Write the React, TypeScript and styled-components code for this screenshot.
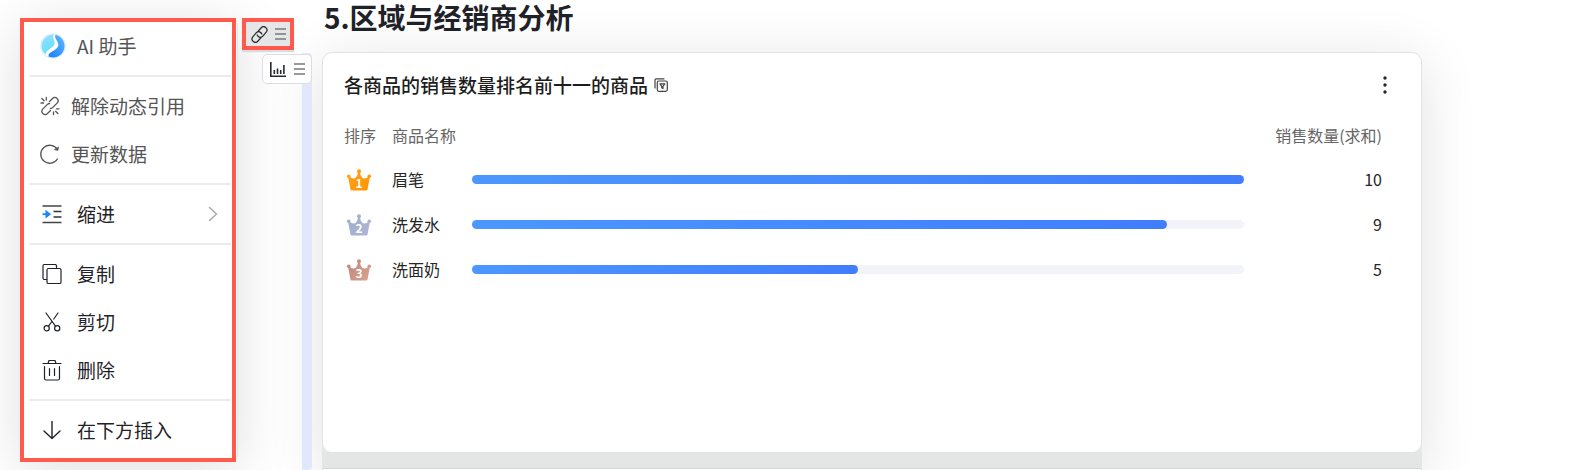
import React from "react";
import styled, { createGlobalStyle } from "styled-components";

const GlobalStyle = createGlobalStyle`
  * { box-sizing: border-box; }
  body {
    margin: 0;
    background: #fff;
    color: #1f2329;
    font-family: "Noto Sans CJK SC", sans-serif;
  }
  button {
    font: inherit;
    color: inherit;
    border: 0;
    background: none;
    padding: 0;
    cursor: pointer;
  }
`;

const Page = styled.div`
  display: flex;
  min-height: 100vh;
  padding-right: 162px;
`;

const MenuPanel = styled.div`
  position: relative;
  z-index: 1;
  flex: none;
  align-self: flex-start;
  margin: 18px 0 8px 20px;
  border-right: 1px solid #e3e4e5;
  padding-right: 1px;
  border-radius: 4px 8px 8px 4px;
  background: #fff;
  box-shadow: 0 8px 56px rgba(0, 0, 0, 0.13);
`;

const Menu = styled.nav`
  width: 216px;
  border: 4px solid #ff5a4d;
  padding-bottom: 4px;
`;

const MenuGroup = styled.div`
  & + &::before {
    content: "";
    display: block;
    height: 2px;
    margin: 5px 1px 5px 5px;
    background: #ebebeb;
  }
`;

const MenuItem = styled.button<{ $muted?: boolean; $inset: number; $gap: number }>`
  display: flex;
  align-items: center;
  gap: ${(p) => p.$gap}px;
  width: 100%;
  height: 48px;
  padding: 0 14px 0 ${(p) => p.$inset}px;
  font-size: 19px;
  line-height: 28px;
  color: ${(p) => (p.$muted ? "#555" : "#1f2329")};
  white-space: nowrap;

  svg { flex: none; }
`;

const ItemLabel = styled.span`
  flex: 1;
  text-align: left;
`;

const Gutter = styled.div`
  display: flex;
  flex-direction: column;
  flex: none;
  width: 70px;
  margin: 18px 0 0 4px;
  position: relative;
  z-index: 2;
`;

const LinkHandle = styled.button`
  display: flex;
  align-items: center;
  justify-content: center;
  gap: 7px;
  width: 52px;
  height: 32px;
  border: 4px solid #ff5a4d;
  background: #e5e7e6;
  box-shadow: 0 2px 1px #d9dbdb;
`;

const BlockTrack = styled.div`
  flex: 1;
  margin-top: 3px;
  padding-top: 1px;
  background: linear-gradient(#e2e8fb, #e2e8fb) right / 10px 100% no-repeat;
  border-radius: 4px;
`;

const ChartHandle = styled.button`
  display: flex;
  align-items: center;
  justify-content: center;
  gap: 8px;
  width: 50px;
  height: 30px;
  margin-left: auto;
  border: 1px solid #dcdee0;
  border-radius: 5px;
  background: #fff;
`;

const Doc = styled.main`
  display: flex;
  flex-direction: column;
  flex: 1;
  min-width: 0;
  margin-left: 10px;
`;

const Heading = styled.h1`
  margin: 0;
  height: 52px;
  padding-left: 2px;
  font-size: 28px;
  line-height: 34px;
  font-weight: 700;
`;

const Board = styled.div`
  display: flex;
  flex-direction: column;
  flex: 1;
  gap: 15px;
  border-radius: 12px 12px 0 0;
  background: linear-gradient(#f3f4f4 0 380px, #e4e6e5 402px);
  box-shadow: 0 8px 56px rgba(0, 0, 0, 0.12);
`;

const Card = styled.section`
  min-height: 401px;
  padding: 0 39px 0 21px;
  border: 1px solid #e2e4e4;
  border-radius: 10px;
  background: #fff;
`;

const NextCard = styled.section`
  flex: 1;
  border: 1px solid #d6d8d8;
  border-bottom: 0;
  border-radius: 10px 10px 0 0;
  background: #fff;
`;

const CardHeader = styled.header`
  display: flex;
  align-items: center;
  gap: 6px;
  height: 63px;
  margin-right: -15px;
`;

const CardTitle = styled.h2`
  margin: 0;
  font-size: 19px;
  line-height: 28px;
  font-weight: 500;
  color: #1d1d1d;
`;

const IconButton = styled.button`
  display: flex;
  align-items: center;
  justify-content: center;
  height: 24px;
`;

const MoreButton = styled(IconButton)`
  width: 24px;
  margin-left: auto;
`;

const Table = styled.table`
  width: 100%;
  table-layout: fixed;
  border-collapse: collapse;
  font-size: 16px;
  line-height: 24px;
`;

const Col = styled.col<{ $width?: number }>`
  width: ${(p) => (p.$width ? `${p.$width}px` : "auto")};
`;

const HeadCell = styled.th<{ $end?: boolean }>`
  height: 41px;
  padding: 0 0 4px;
  font-weight: 400;
  color: #666;
  text-align: ${(p) => (p.$end ? "right" : "left")};
  white-space: nowrap;
`;

const Cell = styled.td<{ $end?: boolean }>`
  height: 45px;
  padding: 0 0 2px;
  color: #262626;
  text-align: ${(p) => (p.$end ? "right" : "left")};
`;

const RankCell = styled(Cell)`
  padding: 0 0 0 2px;

  svg { display: block; }
`;

const BarCell = styled(Cell)`
  padding: 0;
`;

const Track = styled.div`
  height: 9px;
  border-radius: 5px;
  background: #f3f4fa;
`;

const Fill = styled.div`
  height: 100%;
  border-radius: 5px;
  background: linear-gradient(90deg, #4c97ff, #407dff);
`;

const line = {
  fill: "none",
  stroke: "currentColor",
  strokeLinecap: "round",
  strokeLinejoin: "round",
} as const;

const AssistantIcon = () => (
  <svg width="26" height="26" viewBox="0 0 26 26" aria-hidden="true">
    <defs>
      <linearGradient id="aiLight" x1="0" y1="0" x2="0.4" y2="1">
        <stop offset="0" stopColor="#9be0ff" />
        <stop offset="1" stopColor="#62deff" />
      </linearGradient>
      <linearGradient id="aiDark" x1="1" y1="0" x2="0.2" y2="1">
        <stop offset="0" stopColor="#62b8ff" />
        <stop offset="1" stopColor="#1e83ff" />
      </linearGradient>
    </defs>
    <circle cx="13" cy="13" r="12.800" fill="#e0edfd" />
    <circle cx="13" cy="13" r="11.500" fill="#fff" />
    <path d="M14 1.500C11.500 5 15.500 8 14.500 11C13.200 15 6 16.500 5.500 21.600A11.500 11.500 0 0 1 14 1.500Z" fill="url(#aiLight)" />
    <path d="M15.500 1.800C13.500 6 20 9 18 13.500C16 18 8 18.500 8.500 23.600A11.500 11.500 0 1 0 15.500 1.800Z" fill="url(#aiDark)" />
  </svg>
);

const UnlinkIcon = () => (
  <svg width="20" height="20" viewBox="0 0 20 20" strokeWidth="1.300" {...line} aria-hidden="true">
    <path d="M9.500 5.500l3-3a3.200 3.200 0 0 1 4.600 4.600l-4.500 4.500a3.200 3.200 0 0 1-2.200.9" />
    <path d="M10.500 14.500l-3 3a3.200 3.200 0 0 1-4.600-4.600l4.500-4.500a3.200 3.200 0 0 1 2.200-.9" />
    <path d="M6.300 1.500v2.500M1.800 2.500l2.300 2.200M1 7h2.500M13.500 16v2.500M15.600 15.200l2.300 2.300M16.500 12.800H19" />
  </svg>
);

const RefreshIcon = () => (
  <svg width="20" height="20" viewBox="0 0 20 20" strokeWidth="1.300" {...line} aria-hidden="true">
    <path d="M17.400 5.500A9 9 0 1 0 17.400 15" />
    <path d="M18.500 3.200L18 6.400L14.500 5.700Z" fill="currentColor" strokeWidth="0.600" />
  </svg>
);

const IndentIcon = () => (
  <svg width="20" height="20" viewBox="0 0 20 20" fill="none" aria-hidden="true">
    <path d="M.5 2h19M.5 18.500h19" stroke="#444" strokeWidth="1.700" />
    <path d="M11.500 7.500h8M11.500 13h8" stroke="#333" strokeWidth="1.300" />
    <path d="M.5 10.200H4" stroke="#1684ff" strokeWidth="1.800" />
    <path d="M3.500 5.800L9 10.200L3.500 14.600Z" fill="#1684ff" />
  </svg>
);

const ChevronIcon = () => (
  <svg width="10" height="16" viewBox="0 0 10 16" strokeWidth="1.500" {...line} stroke="#aaa" aria-hidden="true">
    <path d="M1.500 1.500L8.500 8L1.500 14.500" />
  </svg>
);

const CopyIcon = () => (
  <svg width="20" height="20" viewBox="0 0 20 20" strokeWidth="1.200" {...line} aria-hidden="true">
    <path d="M4.500 15.500H2.500a1.500 1.500 0 0 1-1.500-1.500V2a1.500 1.500 0 0 1 1.500-1.500h10.500a1.500 1.500 0 0 1 1.500 1.500v1.500" />
    <rect x="5" y="4.500" width="14" height="15" rx="1.500" />
  </svg>
);

const CutIcon = () => (
  <svg width="20" height="20" viewBox="0 0 20 20" strokeWidth="1.200" {...line} aria-hidden="true">
    <path d="M4 1l9.500 13.200M16 1l-4.200 6M9.500 10L6.500 14.200" />
    <circle cx="4.700" cy="16.300" r="2.600" />
    <circle cx="15.200" cy="16.300" r="2.600" />
  </svg>
);

const TrashIcon = () => (
  <svg width="20" height="22" viewBox="0 0 20 22" strokeWidth="1.200" {...line} aria-hidden="true">
    <path d="M1 4.500h18M6 4.500L7 1.500h6l1 3M2.500 7.500v12a1.500 1.500 0 0 0 1.500 1.500h12a1.500 1.500 0 0 0 1.500-1.500v-12M7.500 9.500v7M12.500 9.500v7" />
  </svg>
);

const ArrowDownIcon = () => (
  <svg width="20" height="20" viewBox="0 0 20 20" strokeWidth="1.400" {...line} aria-hidden="true">
    <path d="M10 1.500v17M2 11l8 7.500l8-7.500" />
  </svg>
);

const LinkIcon = () => (
  <svg width="17" height="17" viewBox="0 0 17 17" strokeWidth="1.200" {...line} stroke="#26282b" aria-hidden="true">
    <path d="M7 5.400L10 2A3.300 3.300 0 0 1 15.200 6.200L11.400 10.600A3.300 3.300 0 0 1 6.200 8.800" />
    <path d="M10 11.600L7 15A3.300 3.300 0 0 1 1.800 10.800L5.600 6.400A3.300 3.300 0 0 1 10.800 8.200" />
  </svg>
);

const GripIcon = () => (
  <svg width="11" height="12" viewBox="0 0 11 12" stroke="#77797b" strokeWidth="1.500" aria-hidden="true">
    <path d="M0 1h11M0 6h11M0 11h11" />
  </svg>
);

const ChartIcon = () => (
  <svg width="16" height="15" viewBox="0 0 16 15" fill="none" stroke="#26282b" strokeWidth="1.600" aria-hidden="true">
    <path d="M.8 0v14.200H16M4.300 8v4M7.500 6.500v5.500M10.700 8v4M13.900 3v9" />
  </svg>
);

const FilterCopyIcon = () => (
  <svg width="14" height="14" viewBox="0 0 14 14" strokeWidth="1.200" {...line} stroke="#444" aria-hidden="true">
    <path d="M1 10V2a1.200 1.200 0 0 1 1.200-1.200H10" />
    <rect x="3.300" y="3" width="10" height="10.300" rx="1.500" />
    <path d="M6 5.800h4.800L9 8.300v2.300l-1.300-.8V8.300Z" />
  </svg>
);

const MoreIcon = () => (
  <svg width="4" height="18" viewBox="0 0 4 18" fill="#262626" aria-hidden="true">
    <circle cx="2" cy="2" r="1.700" />
    <circle cx="2" cy="9" r="1.700" />
    <circle cx="2" cy="16" r="1.700" />
  </svg>
);

const CrownDigit = styled.text`
  font-family: "Noto Sans CJK SC", sans-serif;
  font-size: 12px;
  font-weight: 700;
  fill: #fff;
  text-anchor: middle;
`;

const Crown = ({ rank, from, to }: { rank: number; from: string; to: string }) => (
  <svg width="26" height="22" viewBox="0 0 26 22" role="img">
    <defs>
      <linearGradient id={`crown${rank}`} gradientUnits="userSpaceOnUse" x1="1" y1="0" x2="25" y2="22">
        <stop offset="0" stopColor={from} />
        <stop offset="1" stopColor={to} />
      </linearGradient>
    </defs>
    <g fill={`url(#crown${rank})`}>
      <circle cx="13" cy="2.300" r="2" />
      <circle cx="2.700" cy="7.200" r="1.800" />
      <circle cx="23.300" cy="7.200" r="1.800" />
      <path d="M12.200 3H13.800L14.800 6.500Q15.800 9 18 9.500Q20.500 9.800 22.400 7.800L23.800 8.200L21.600 20.300A1.500 1.500 0 0 1 20.200 21.500H5.800A1.500 1.500 0 0 1 4.400 20.300L2.200 8.200L3.600 7.800Q5.500 9.800 8 9.500Q10.200 9 11.200 6.500Z" />
    </g>
    <CrownDigit x="13" y="19">{rank}</CrownDigit>
  </svg>
);

const products = [
  { name: "眉笔", value: 10, from: "#ffa11a", to: "#ff9500" },
  { name: "洗发水", value: 9, from: "#9db0c4", to: "#b0b4dc" },
  { name: "洗面奶", value: 5, from: "#bf8474", to: "#d9a594" },
];
const maxValue = 10;

export default function App() {
  return (
    <>
      <GlobalStyle />
      <Page>
        <MenuPanel>
          <Menu aria-label="块菜单">
            <MenuGroup>
              <MenuItem $muted $inset={16} $gap={11}><AssistantIcon /><ItemLabel>AI 助手</ItemLabel></MenuItem>
            </MenuGroup>
            <MenuGroup>
              <MenuItem $muted $inset={16} $gap={11}><UnlinkIcon /><ItemLabel>解除动态引用</ItemLabel></MenuItem>
              <MenuItem $muted $inset={16} $gap={11}><RefreshIcon /><ItemLabel>更新数据</ItemLabel></MenuItem>
            </MenuGroup>
            <MenuGroup>
              <MenuItem $inset={18} $gap={15}><IndentIcon /><ItemLabel>缩进</ItemLabel><ChevronIcon /></MenuItem>
            </MenuGroup>
            <MenuGroup>
              <MenuItem $inset={18} $gap={15}><CopyIcon /><ItemLabel>复制</ItemLabel></MenuItem>
              <MenuItem $inset={18} $gap={15}><CutIcon /><ItemLabel>剪切</ItemLabel></MenuItem>
              <MenuItem $inset={18} $gap={15}><TrashIcon /><ItemLabel>删除</ItemLabel></MenuItem>
            </MenuGroup>
            <MenuGroup>
              <MenuItem $inset={18} $gap={15}><ArrowDownIcon /><ItemLabel>在下方插入</ItemLabel></MenuItem>
            </MenuGroup>
          </Menu>
        </MenuPanel>
        <Gutter>
          <LinkHandle aria-label="引用块"><LinkIcon /><GripIcon /></LinkHandle>
          <BlockTrack>
            <ChartHandle aria-label="图表块"><ChartIcon /><GripIcon /></ChartHandle>
          </BlockTrack>
        </Gutter>
        <Doc>
          <Heading>5.区域与经销商分析</Heading>
          <Board>
            <Card>
              <CardHeader>
                <CardTitle>各商品的销售数量排名前十一的商品</CardTitle>
                <IconButton aria-label="筛选"><FilterCopyIcon /></IconButton>
                <MoreButton aria-label="更多"><MoreIcon /></MoreButton>
              </CardHeader>
              <Table>
                <colgroup>
                  <Col $width={48} />
                  <Col $width={80} />
                  <Col />
                  <Col $width={138} />
                </colgroup>
                <thead>
                  <tr>
                    <HeadCell scope="col">排序</HeadCell>
                    <HeadCell scope="col" colSpan={2}>商品名称</HeadCell>
                    <HeadCell scope="col" $end>销售数量(求和)</HeadCell>
                  </tr>
                </thead>
                <tbody>
                  {products.map((p, i) => (
                    <tr key={p.name}>
                      <RankCell><Crown rank={i + 1} from={p.from} to={p.to} /></RankCell>
                      <Cell>{p.name}</Cell>
                      <BarCell>
                        <Track><Fill style={{ width: `${(p.value / maxValue) * 100}%` }} /></Track>
                      </BarCell>
                      <Cell $end>{p.value}</Cell>
                    </tr>
                  ))}
                </tbody>
              </Table>
            </Card>
            <NextCard />
          </Board>
        </Doc>
      </Page>
    </>
  );
}
